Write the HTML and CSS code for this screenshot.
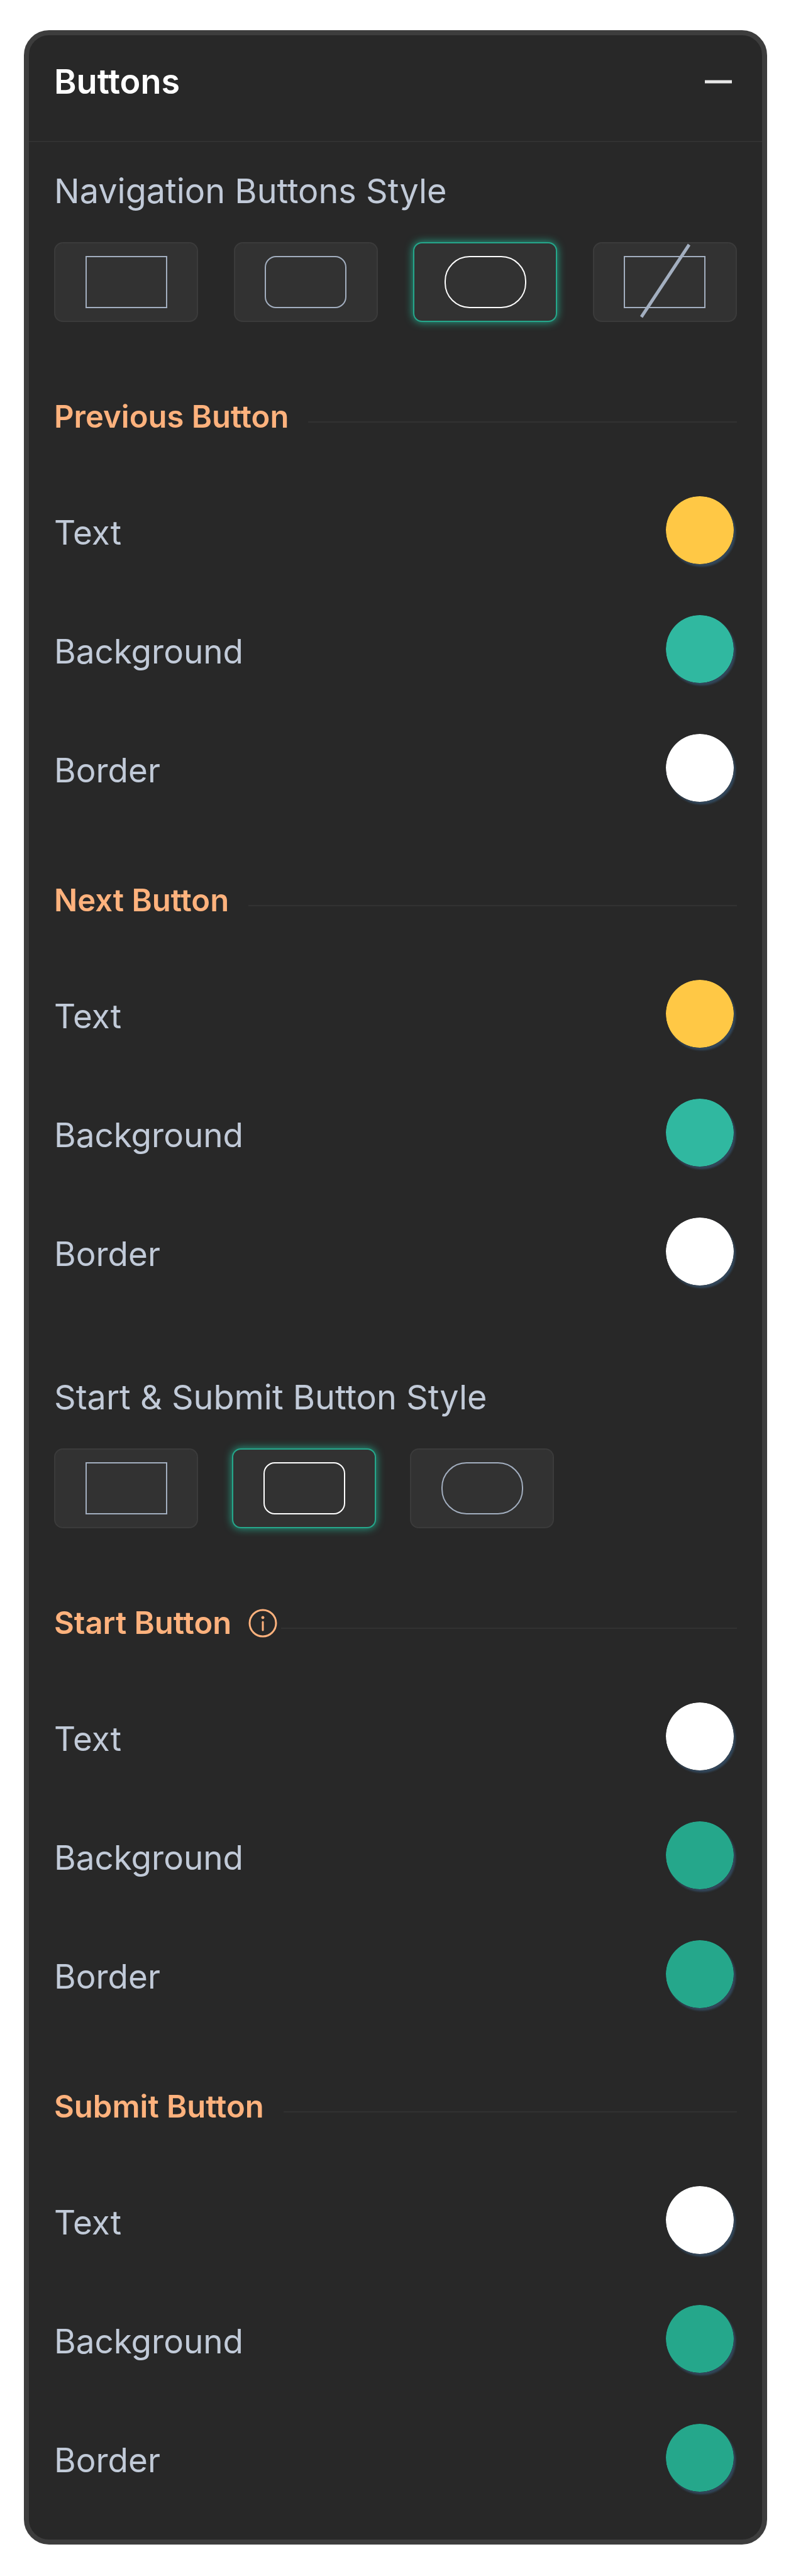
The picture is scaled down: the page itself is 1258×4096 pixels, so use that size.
FILE: index.html
```
<!DOCTYPE html>
<html lang="en">
<head>
    <meta charset="UTF-8">
    <meta name="viewport" content="width=device-width, initial-scale=1.0">
    <title>Buttons</title>
    <link rel="stylesheet" href="styles.css">
</head>
<body>
    <section class="panel">
        <header class="panel-header">
            <h2>Buttons</h2>
            <button type="button" class="collapse" aria-label="Collapse">
                <svg width="43" height="8" viewBox="0 0 43 8"><path d="M0 4h43" stroke="#e8e8e8" stroke-width="5"/></svg>
            </button>
        </header>

        <div class="panel-body">
            <!-- navigation buttons -->
            <h3 class="style-title">Navigation Buttons Style</h3>
            <div class="style-options spread">
                <button type="button" class="option" aria-label="Square"><span class="shape"></span></button>
                <button type="button" class="option" aria-label="Rounded"><span class="shape rounded"></span></button>
                <button type="button" class="option selected" aria-label="Pill" aria-pressed="true"><span class="shape pill"></span></button>
                <button type="button" class="option" aria-label="None">
                    <span class="shape"></span>
                    <svg class="slash" viewBox="0 0 229 127"><path d="M153 4L77 119" stroke="#a3afc0" stroke-width="5"/></svg>
                </button>
            </div>

            <div class="group first">
                <h4 class="group-title">Previous Button</h4>
                <div class="row">
                    <label for="prev-text">Text</label>
                    <input type="color" id="prev-text" value="#ffc845">
                </div>
                <div class="row">
                    <label for="prev-bg">Background</label>
                    <input type="color" id="prev-bg" value="#30b8a0">
                </div>
                <div class="row">
                    <label for="prev-border">Border</label>
                    <input type="color" id="prev-border" value="#ffffff">
                </div>
            </div>

            <div class="group">
                <h4 class="group-title">Next Button</h4>
                <div class="row">
                    <label for="next-text">Text</label>
                    <input type="color" id="next-text" value="#ffc845">
                </div>
                <div class="row">
                    <label for="next-bg">Background</label>
                    <input type="color" id="next-bg" value="#30b8a0">
                </div>
                <div class="row">
                    <label for="next-border">Border</label>
                    <input type="color" id="next-border" value="#ffffff">
                </div>
            </div>

            <!-- start & submit buttons -->
            <h3 class="style-title second">Start &amp; Submit Button Style</h3>
            <div class="style-options">
                <button type="button" class="option" aria-label="Square"><span class="shape"></span></button>
                <button type="button" class="option selected" aria-label="Rounded" aria-pressed="true"><span class="shape rounded"></span></button>
                <button type="button" class="option" aria-label="Pill"><span class="shape pill"></span></button>
            </div>

            <div class="group first">
                <h4 class="group-title with-info">Start Button
                    <svg class="info" viewBox="0 0 46 46" fill="none" stroke="#ffb27d">
                        <circle cx="23" cy="23" r="21" stroke-width="3"/>
                        <path d="M23 21v13" stroke-width="3" stroke-linecap="round"/>
                        <circle cx="23" cy="14" r="2" fill="#ffb27d" stroke-width="1"/>
                    </svg>
                </h4>
                <div class="row">
                    <label for="start-text">Text</label>
                    <input type="color" id="start-text" value="#ffffff">
                </div>
                <div class="row">
                    <label for="start-bg">Background</label>
                    <input type="color" id="start-bg" value="#25a78b">
                </div>
                <div class="row">
                    <label for="start-border">Border</label>
                    <input type="color" id="start-border" value="#25a78b">
                </div>
            </div>

            <div class="group">
                <h4 class="group-title">Submit Button</h4>
                <div class="row">
                    <label for="submit-text">Text</label>
                    <input type="color" id="submit-text" value="#ffffff">
                </div>
                <div class="row">
                    <label for="submit-bg">Background</label>
                    <input type="color" id="submit-bg" value="#25a78b">
                </div>
                <div class="row">
                    <label for="submit-border">Border</label>
                    <input type="color" id="submit-border" value="#25a78b">
                </div>
            </div>
        </div>
    </section>
</body>
</html>
```

FILE: styles.css
```
* {
    box-sizing: border-box;
}

body {
    margin: 0;
    padding: 48px 38px 50px;
    background: #fff;
    color: #c1cad8;
    font-family: Inter, "Open Sans", sans-serif;
    font-size: 53px;
    line-height: 64px;
}

h2,
h3,
h4 {
    margin: 0;
    font-size: 54px;
}

button {
    padding: 0;
    border: none;
    background: none;
    cursor: pointer;
}

.panel {
    border: 8px solid #3d3d3d;
    border-radius: 40px;
    background: #282828;
}

.panel-header {
    display: flex;
    align-items: center;
    justify-content: space-between;
    height: 170px;
    padding: 0 48px 20px 40px;
    border-bottom: 2px solid #323232;
}

.panel-header h2 {
    color: #fff;
    font-weight: 600;
}

.collapse svg {
    display: block;
}

.panel-body {
    padding: 46px 40px 32px;
}

.style-title {
    margin-bottom: 49px;
    font-weight: 400;
}

.style-title.second {
    margin-top: 102px;
}

.style-options {
    display: flex;
    gap: 54px;
}

.style-options.spread {
    justify-content: space-between;
    gap: 0;
}

.option {
    position: relative;
    display: flex;
    align-items: center;
    justify-content: center;
    width: 229px;
    height: 127px;
    border: 2px solid #3b3b3b;
    border-radius: 14px;
    background: #323232;
    color: #a3afc0;
}

.option.selected {
    border-color: #25a78b;
    box-shadow: 0 0 14px #25a78b;
    color: #fff;
}

.shape {
    width: 130px;
    height: 83px;
    border: 2px solid currentColor;
}

.rounded {
    border-radius: 18px;
}

.pill {
    border-radius: 40px;
}

/* line across the "none" option */
.slash {
    position: absolute;
    inset: -2px;
}

.group {
    padding-top: 81px;
}

.group.first {
    padding-top: 119px;
}

.group-title {
    display: flex;
    align-items: center;
    margin-bottom: 57px;
    color: #ffb27d;
    font-size: 49px;
    font-weight: 600;
}

.group-title::after {
    content: "";
    flex: 1;
    height: 2px;
    margin: 16px 0 0 31px;
    background: #323232;
}

.with-info::after {
    margin-left: 6px;
}

.info {
    width: 46px;
    height: 46px;
    margin-left: 27px;
}

.row {
    display: flex;
    align-items: center;
    justify-content: space-between;
    height: 189px;
}

.row input {
    width: 108px;
    height: 108px;
    margin: 0 5px 8px 0;
    padding: 0;
    border: none;
    border-radius: 50%;
    background: none;
    box-shadow: 3px 4px 3px #32475b;
    cursor: pointer;
    appearance: none;
}

.row input::-webkit-color-swatch-wrapper {
    padding: 0;
}

.row input::-webkit-color-swatch {
    border: none;
    border-radius: 50%;
}
```
